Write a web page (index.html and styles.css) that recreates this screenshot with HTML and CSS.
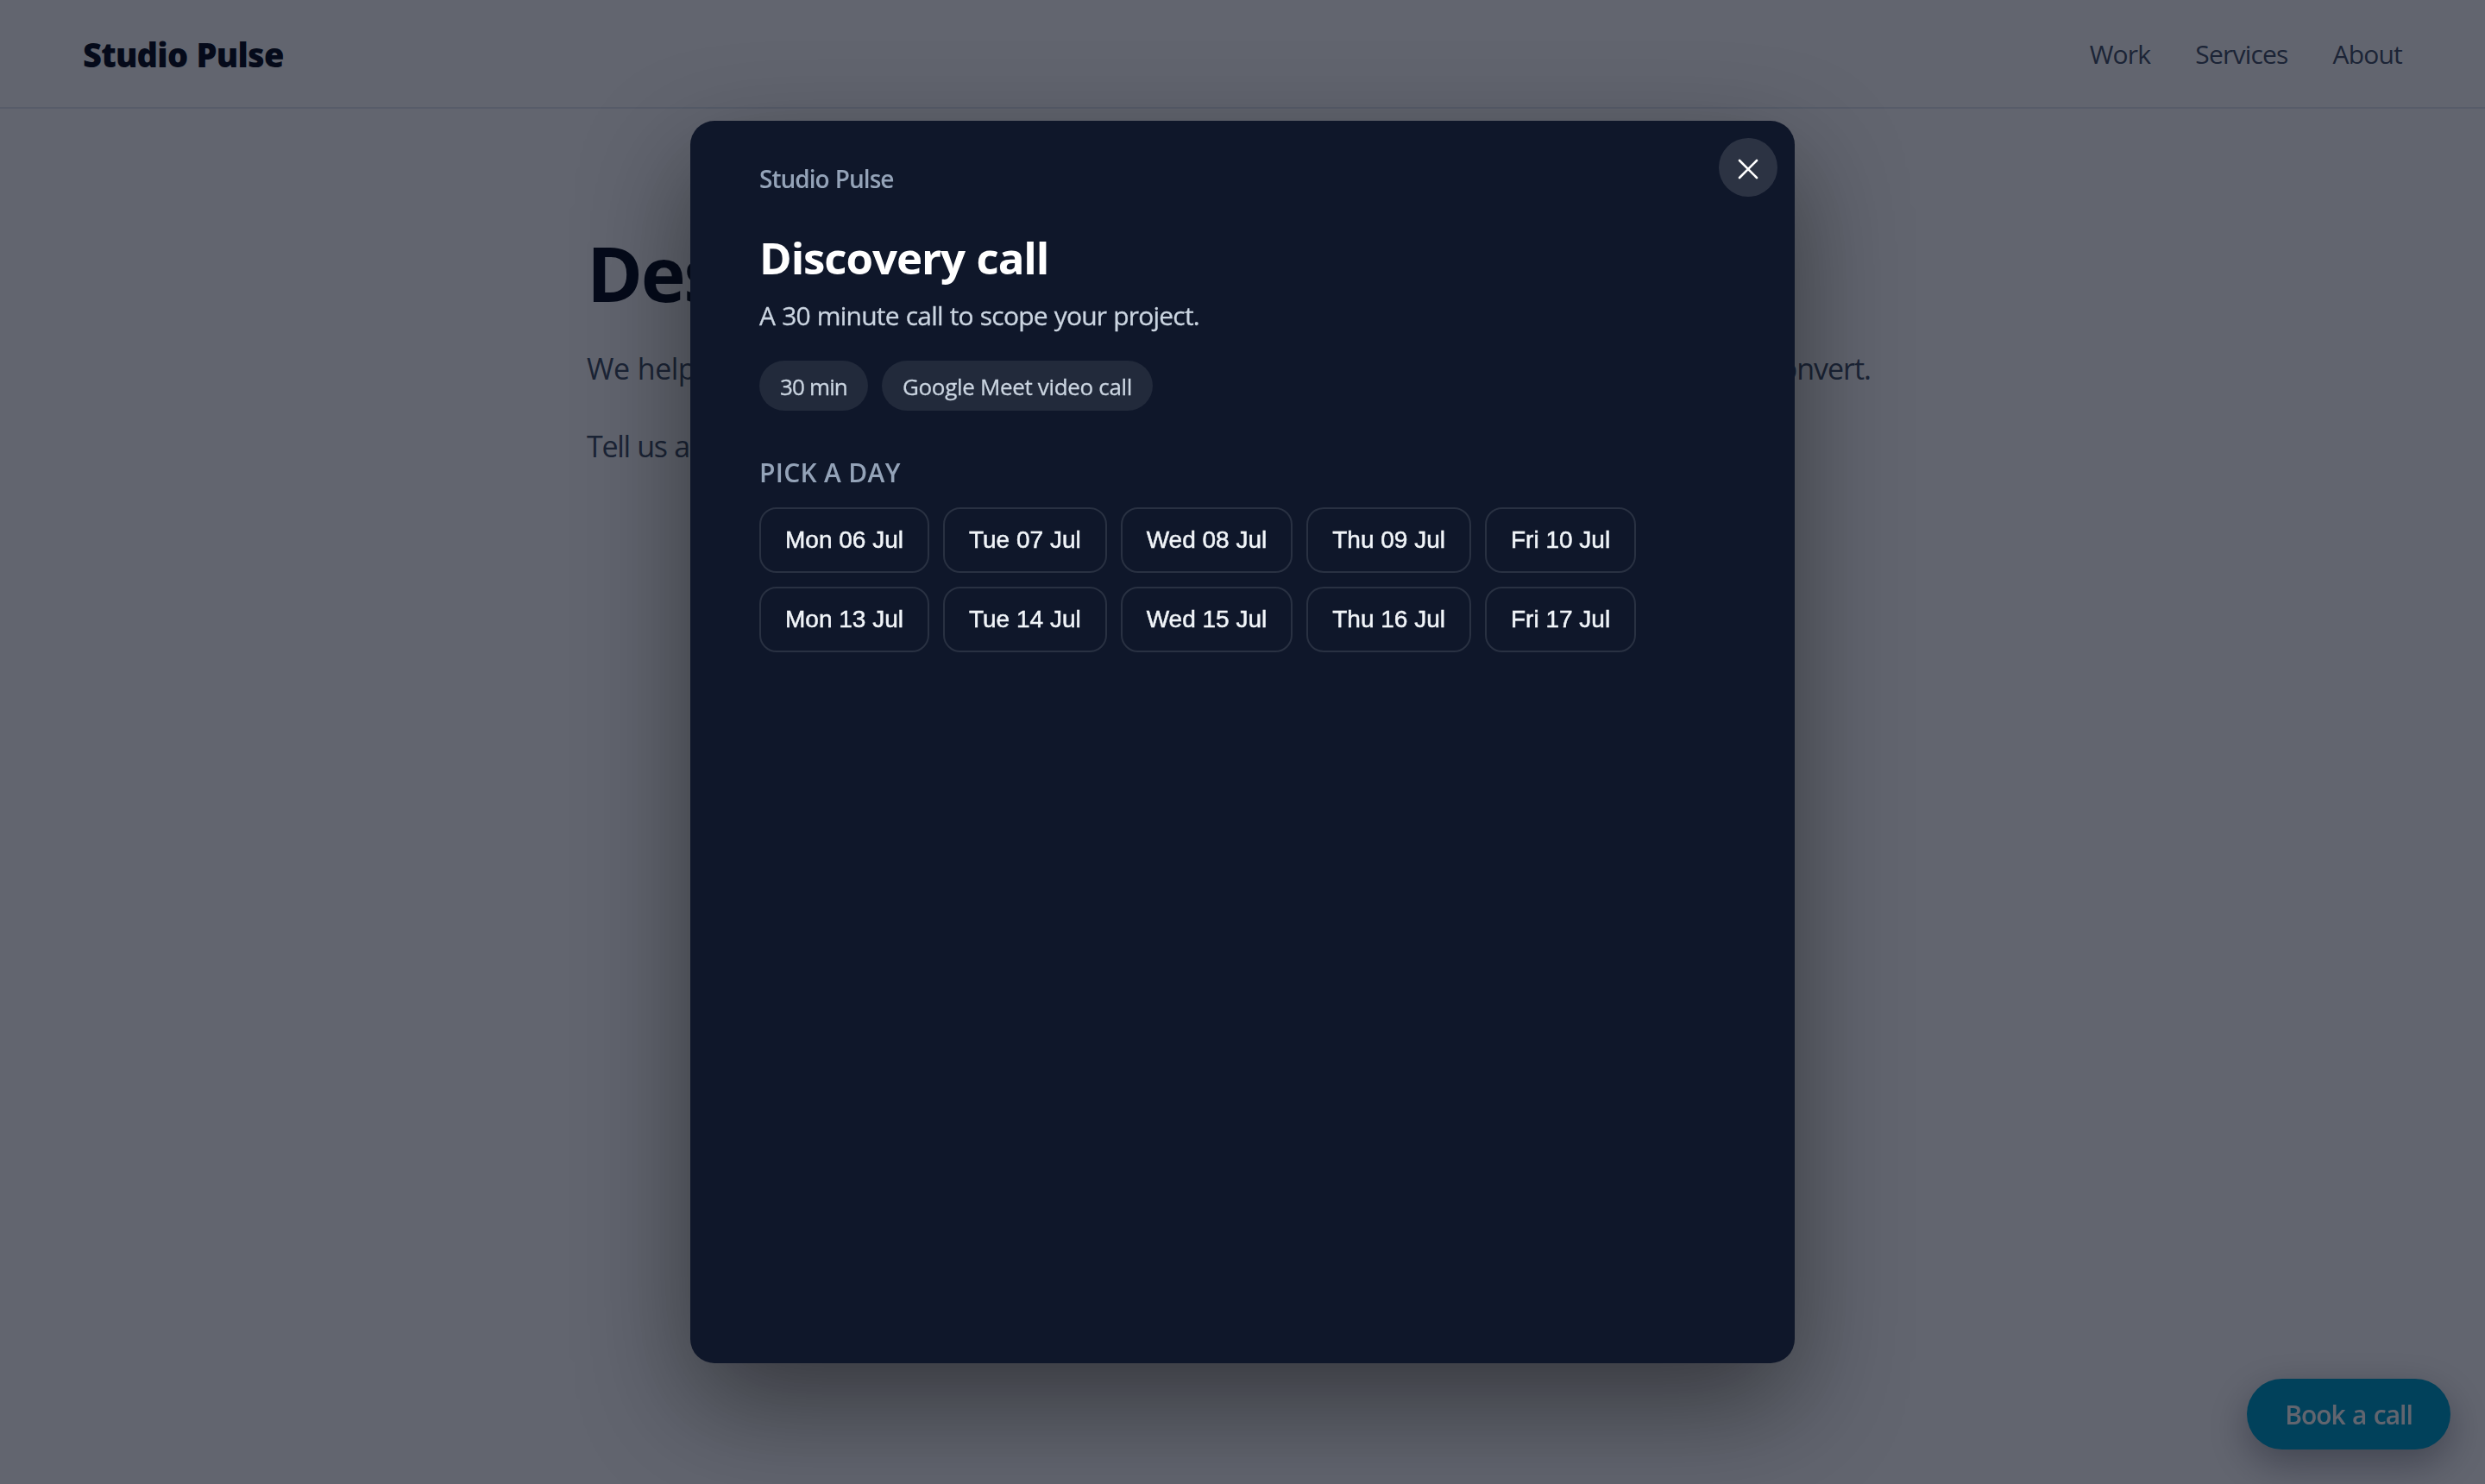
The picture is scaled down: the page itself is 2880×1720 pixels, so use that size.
FILE: index.html
```
<!DOCTYPE html>
<html lang="en">
<head>
    <meta charset="UTF-8" />
    <meta name="viewport" content="width=device-width, initial-scale=1.0">
    <title>Studio Pulse</title>
    <link rel="stylesheet" href="styles.css">
</head>
<body>
    <header class="header">
        <div class="logo">Studio Pulse</div>
        <nav class="nav">
            <a href="#work">Work</a>
            <a href="#services">Services</a>
            <a href="#about">About</a>
        </nav>
    </header>

    <main class="hero">
        <h1>Design that works</h1>
        <p class="lead">
            <span>We help small teams ship brands</span>
            <span class="end">and websites that convert.</span>
        </p>
        <p>Tell us about your project.</p>
    </main>

    <button class="book-btn">Book a call</button>

    <div class="overlay">
        <div class="modal" role="dialog" aria-label="Discovery call">
            <button class="close" aria-label="Close">
                <svg viewBox="0 0 24 24" width="24" height="24"><path d="M2 2L22 22M22 2L2 22"/></svg>
            </button>
            <div class="brand">Studio Pulse</div>
            <h2>Discovery call</h2>
            <p class="desc">A 30 minute call to scope your project.</p>
            <div class="chips">
                <span class="chip duration">30 min</span>
                <span class="chip">Google Meet video call</span>
            </div>
            <h3>PICK A DAY</h3>
            <div class="days">
                <button>Mon 06 Jul</button>
                <button>Tue 07 Jul</button>
                <button>Wed 08 Jul</button>
                <button>Thu 09 Jul</button>
                <button>Fri 10 Jul</button>
                <button>Mon 13 Jul</button>
                <button>Tue 14 Jul</button>
                <button>Wed 15 Jul</button>
                <button>Thu 16 Jul</button>
                <button>Fri 17 Jul</button>
            </div>
        </div>
    </div>
</body>
</html>
```
FILE: styles.css
```
* {
    box-sizing: border-box;
}

body {
    margin: 0;
    height: 100vh;
    overflow: hidden;
    background: #fff;
    color: #0b1220;
    font-family: 'Segoe UI', 'Open Sans', sans-serif;
}

button {
    font-family: inherit;
    border: none;
    padding: 0;
    cursor: pointer;
}

.header {
    display: flex;
    align-items: center;
    justify-content: space-between;
    height: 126px;
    padding: 0 96px;
    border-bottom: 2px solid #e2e8f0;
}

.logo {
    padding-top: 2px;
    font-size: 38px;
    font-weight: 800;
    letter-spacing: -0.75px;
    word-spacing: 1px;
}

.nav {
    display: flex;
    gap: 52px;
}

.nav a {
    color: #475569;
    font-size: 30px;
    letter-spacing: -0.8px;
    text-decoration: none;
}

.hero {
    width: 1520px;
    margin: 0 auto;
    padding-top: 144px;
}

.hero h1 {
    margin: 0;
    font-size: 88px;
    line-height: 92px;
    letter-spacing: -2.5px;
}

.hero p {
    margin: 32px 0 0;
    color: #475569;
    font-size: 34px;
    line-height: 58px;
    letter-spacing: -1.3px;
    word-spacing: 1px;
}

.hero .lead {
    display: flex;
    justify-content: space-between;
    width: 1488px;
    margin-top: 36px;
    letter-spacing: -0.5px;
    white-space: nowrap;
}

.lead .end {
    letter-spacing: -1px;
}

.book-btn {
    position: fixed;
    right: 40px;
    bottom: 40px;
    width: 236px;
    height: 82px;
    border-radius: 41px;
    background: #00a1ca;
    color: #fff;
    font-size: 30px;
    font-weight: 600;
    letter-spacing: -1px;
    word-spacing: 1.5px;
    box-shadow: 0 16px 48px rgba(2, 6, 23, 0.35);
}

/* Modal */
.overlay {
    position: fixed;
    inset: 0;
    display: flex;
    align-items: center;
    justify-content: center;
    background: rgba(2, 6, 23, 0.62);
}

.modal {
    position: relative;
    width: 1280px;
    height: 1440px;
    padding: 47px 80px;
    border-radius: 28px;
    background: #0f172a;
    box-shadow: 0 48px 128px rgba(0, 0, 0, 0.45);
}

.close {
    position: absolute;
    top: 20px;
    right: 20px;
    display: flex;
    align-items: center;
    justify-content: center;
    width: 68px;
    height: 68px;
    padding-top: 3px;
    border-radius: 50%;
    background: rgba(255, 255, 255, 0.12);
}

.close path {
    stroke: #fff;
    stroke-width: 2.6;
    stroke-linecap: round;
}

.brand {
    color: #94a3b8;
    font-size: 28px;
    font-weight: 650;
    line-height: 40px;
    letter-spacing: -1px;
    word-spacing: 1px;
}

.modal h2 {
    margin: 37px 0 0;
    color: #fff;
    font-size: 51px;
    line-height: 68px;
    letter-spacing: -1.1px;
    word-spacing: 1.5px;
}

.desc {
    margin: 12px 0 0;
    color: #cbd5e1;
    font-size: 30px;
    line-height: 44px;
    letter-spacing: -0.8px;
    word-spacing: 1px;
}

.chips {
    display: flex;
    gap: 16px;
    margin-top: 30px;
}

.chip {
    height: 58px;
    padding: 0 24px;
    border-radius: 29px;
    background: #222a3b;
    color: #cbd5e1;
    font-size: 26px;
    line-height: 60px;
    letter-spacing: -0.33px;
}

.chip.duration {
    letter-spacing: -0.85px;
}

.modal h3 {
    margin: 50px 0 0;
    color: #94a3b8;
    font-size: 30px;
    font-weight: 600;
    line-height: 44px;
    letter-spacing: 0.3px;
}

.days {
    display: flex;
    flex-wrap: wrap;
    gap: 16px;
    margin-top: 18px;
}

.days button {
    height: 76px;
    padding: 0 28px;
    border: 2px solid #293142;
    border-radius: 20px;
    background: none;
    color: #f1f5f9;
    font-family: 'Liberation Sans', Arial, sans-serif;
    font-size: 28px;
    -webkit-text-stroke: 0.5px #f1f5f9;
}

.desc,
.chip {
    -webkit-text-stroke: 0.3px #cbd5e1;
}
```
